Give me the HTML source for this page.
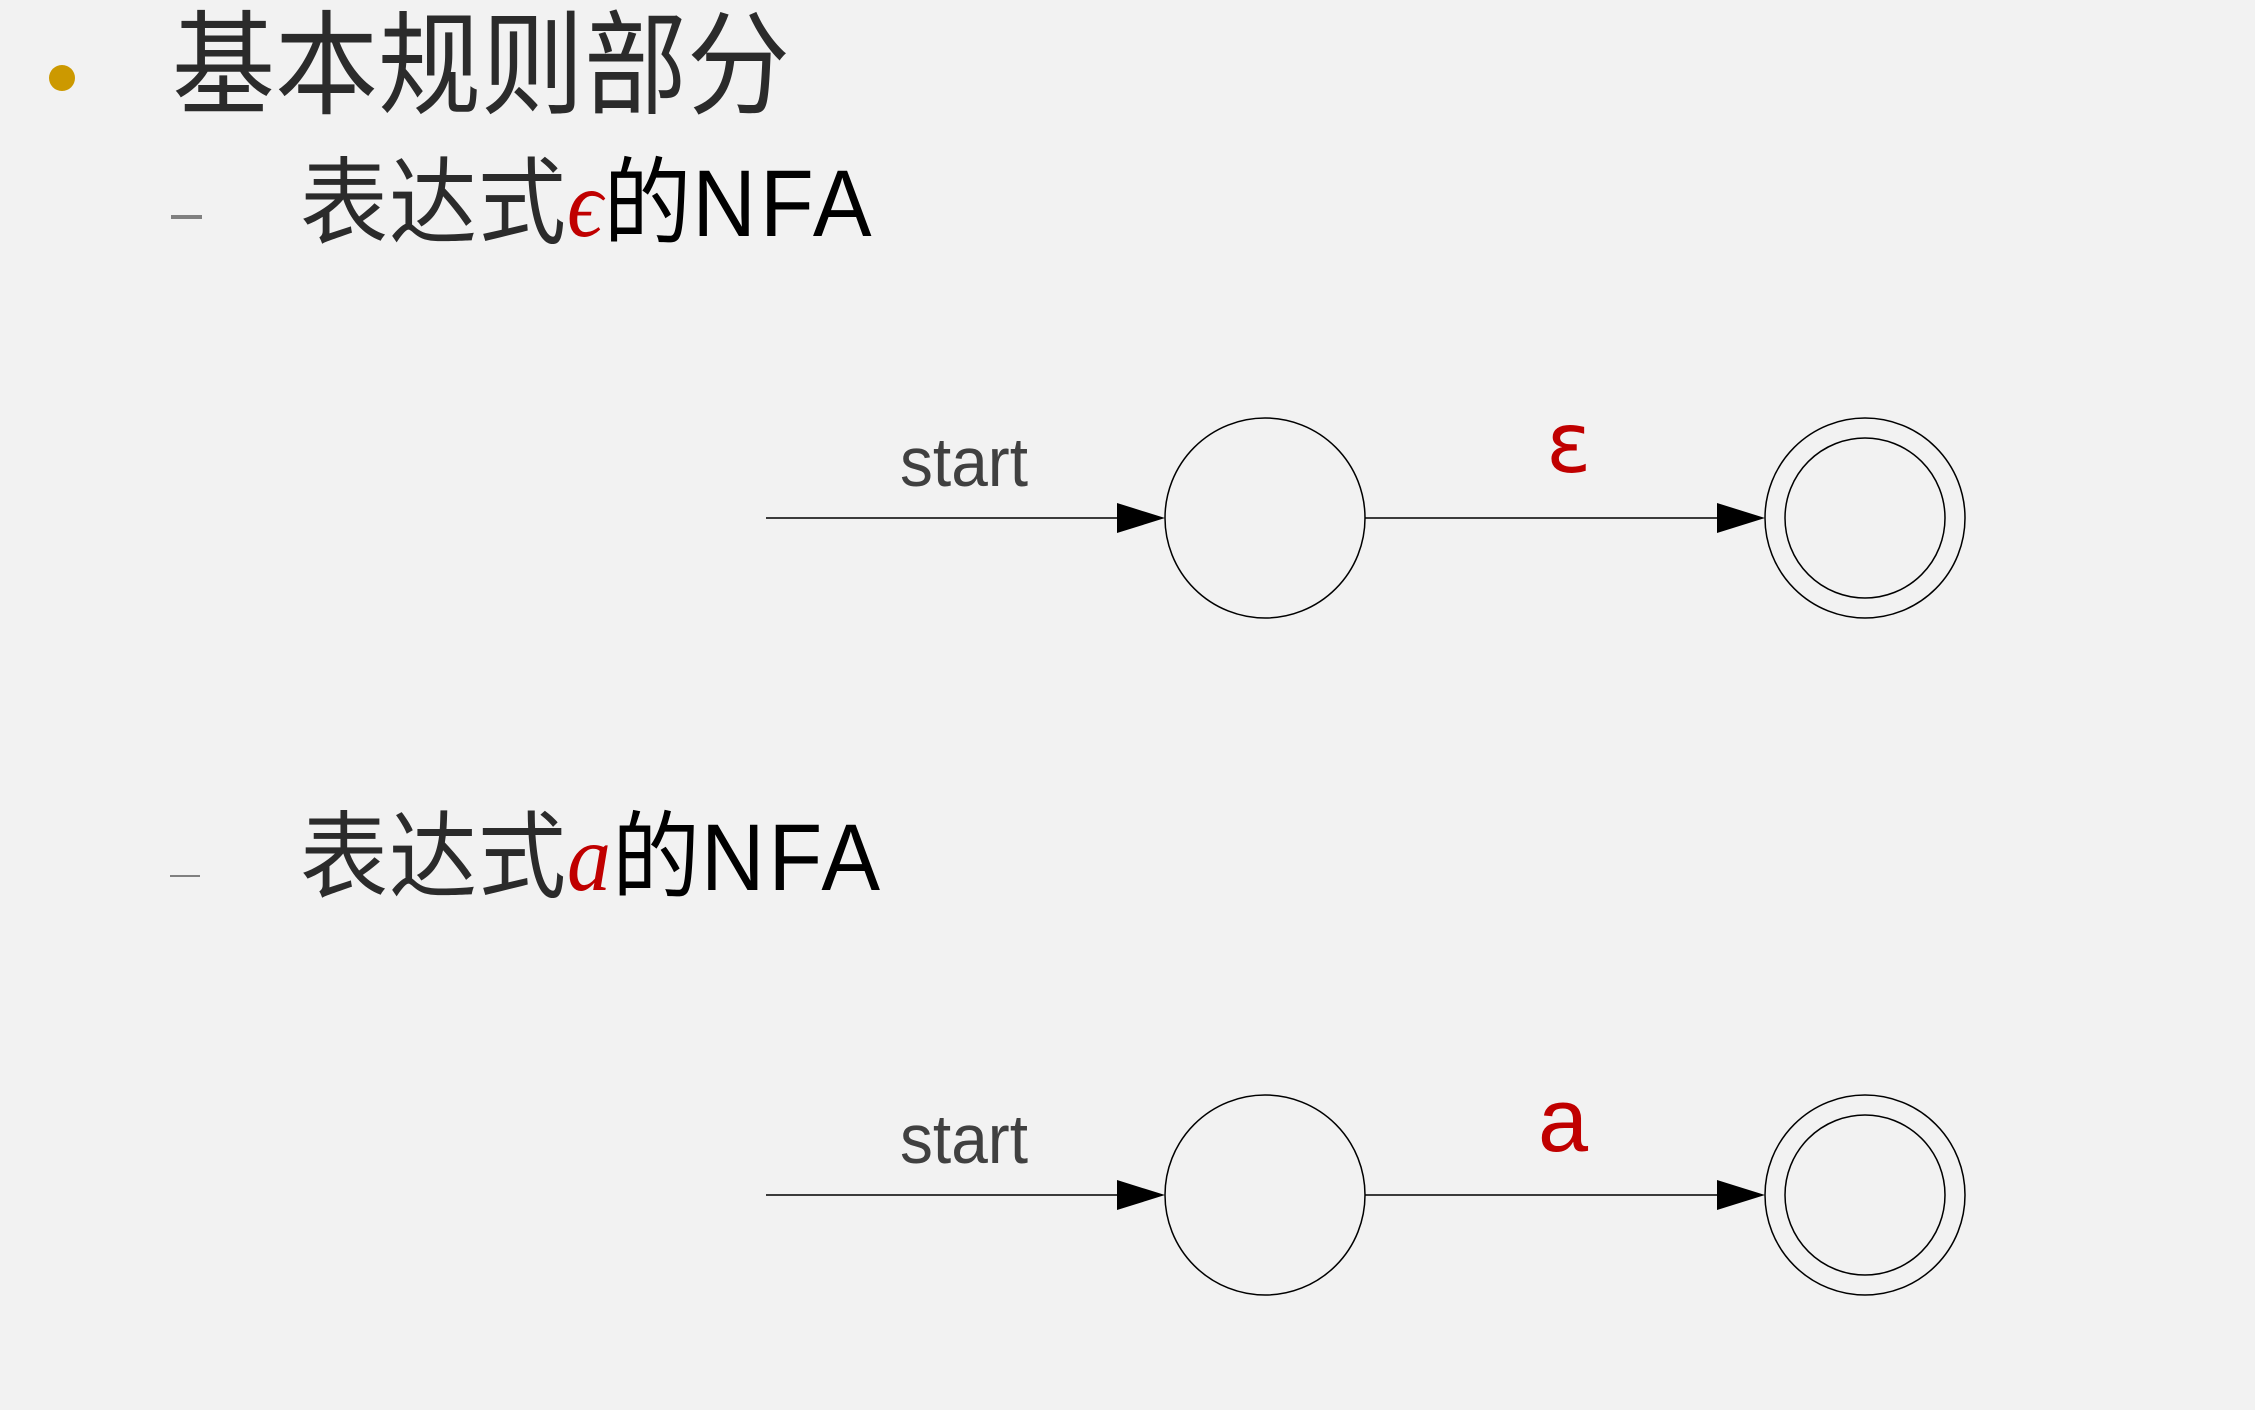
<!DOCTYPE html>
<html><head><meta charset="utf-8"><style>
html,body{margin:0;padding:0;background:#f2f2f2;width:2255px;height:1410px;overflow:hidden}
svg{display:block}
</style></head><body>
<svg width="2255" height="1410" xmlns="http://www.w3.org/2000/svg">
<rect width="2255" height="1410" fill="#f2f2f2"/>
<ellipse cx="62" cy="78" rx="13" ry="13" fill="#cc9900"/>
<g transform="translate(0,105) scale(1,1.1) translate(0,-105)">
<text x="172" y="105" font-family="Noto Sans CJK SC, sans-serif" font-size="103" fill="#2b2b2b">基本规则部分</text>
</g>
<rect x="171" y="215" width="31" height="4" fill="#808080"/>
<g transform="translate(0,236) scale(1,1.08) translate(0,-236)">
<text x="300" y="236" font-size="88" fill="#2b2b2b" font-family="Liberation Sans, Noto Sans CJK SC, sans-serif" letter-spacing="1"><tspan font-family="Noto Sans CJK SC, sans-serif">表达式</tspan><tspan fill="#c00000" font-style="italic" font-family="Liberation Serif, serif">ϵ</tspan><tspan font-family="Noto Sans CJK SC, sans-serif" fill="#000">的</tspan><tspan fill="#000" letter-spacing="4">NFA</tspan></text>
</g>
<rect x="170" y="875" width="30" height="2" fill="#808080"/>
<g transform="translate(0,890) scale(1,1.08) translate(0,-890)">
<text x="300" y="890" font-size="88" fill="#2b2b2b" font-family="Liberation Sans, Noto Sans CJK SC, sans-serif" letter-spacing="1"><tspan font-family="Noto Sans CJK SC, sans-serif">表达式</tspan><tspan fill="#c00000" font-style="italic" font-family="Liberation Serif, serif">a</tspan><tspan font-family="Noto Sans CJK SC, sans-serif" fill="#000">的</tspan><tspan fill="#000" letter-spacing="4">NFA</tspan></text>
</g>

<g stroke="#000" fill="none" stroke-width="1.5">
<line x1="766" y1="518" x2="1120" y2="518"/>
<circle cx="1265" cy="518" r="100"/>
<line x1="1365" y1="518" x2="1720" y2="518"/>
<circle cx="1865" cy="518" r="100"/>
<circle cx="1865" cy="518" r="80"/>
<polygon points="1117,503 1165,518 1117,533" fill="#000" stroke="none"/>
<polygon points="1717,503 1765,518 1717,533" fill="#000" stroke="none"/>
</g>
<g transform="translate(900,486) scale(1,1.1)"><text x="0" y="0" font-family="Liberation Sans, sans-serif" font-size="63" fill="#404040" textLength="128" lengthAdjust="spacingAndGlyphs">start</text></g>
<text x="1546" y="472" font-family="DejaVu Sans, sans-serif" font-size="84" fill="#c00000">ɛ</text>

<g transform="translate(0,677)">
<g stroke="#000" fill="none" stroke-width="1.5">
<line x1="766" y1="518" x2="1120" y2="518"/>
<circle cx="1265" cy="518" r="100"/>
<line x1="1365" y1="518" x2="1720" y2="518"/>
<circle cx="1865" cy="518" r="100"/>
<circle cx="1865" cy="518" r="80"/>
<polygon points="1117,503 1165,518 1117,533" fill="#000" stroke="none"/>
<polygon points="1717,503 1765,518 1717,533" fill="#000" stroke="none"/>
</g>
<g transform="translate(900,486) scale(1,1.1)"><text x="0" y="0" font-family="Liberation Sans, sans-serif" font-size="63" fill="#404040" textLength="128" lengthAdjust="spacingAndGlyphs">start</text></g>
<text x="1538" y="474" font-family="Liberation Sans, sans-serif" font-size="90" fill="#c00000">a</text>
</g>
</svg>
</body></html>
